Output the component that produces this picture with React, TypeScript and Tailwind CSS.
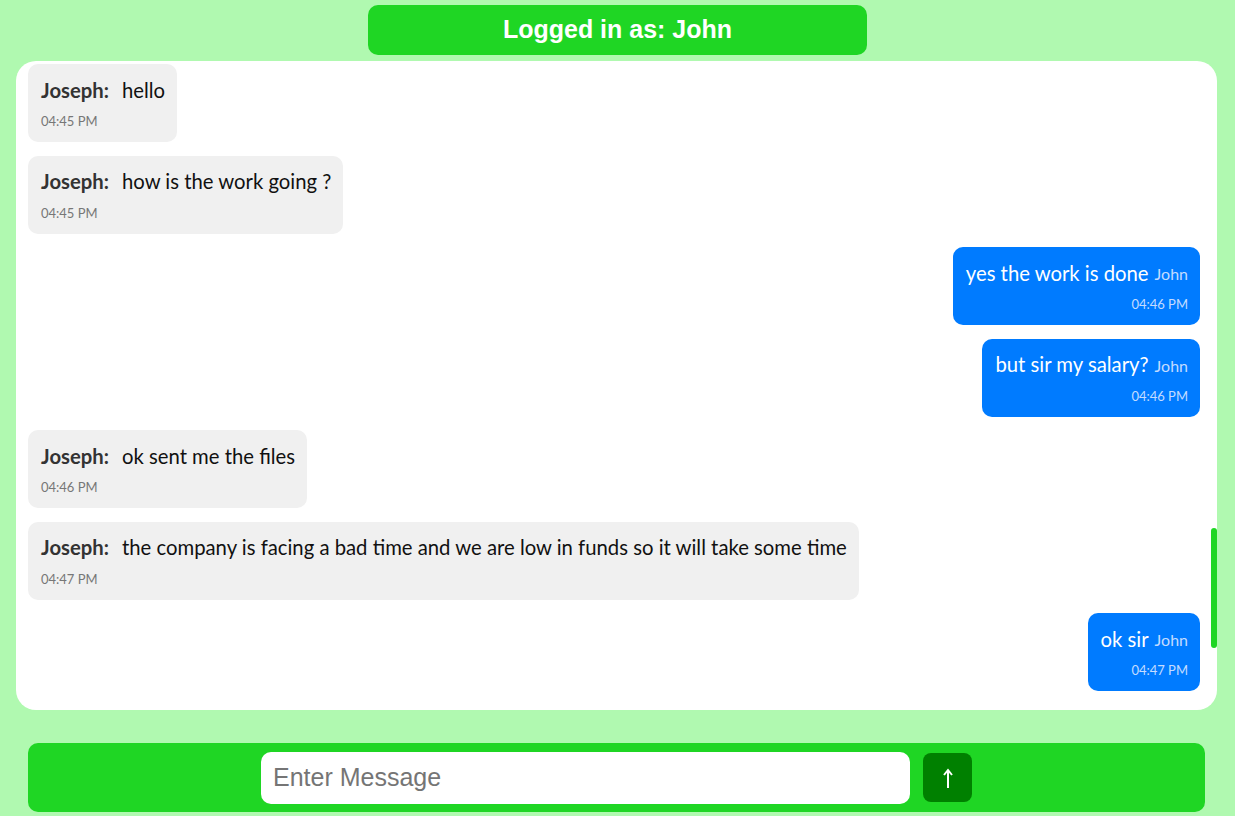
import React from "react";

type Msg = { from: string; text: string; time: string; mine: boolean };

const messages: Msg[] = [
  { from: "Joseph", text: "hello", time: "04:45 PM", mine: false },
  { from: "Joseph", text: "how is the work going ?", time: "04:45 PM", mine: false },
  { from: "John", text: "yes the work is done", time: "04:46 PM", mine: true },
  { from: "John", text: "but sir my salary?", time: "04:46 PM", mine: true },
  { from: "Joseph", text: "ok sent me the files", time: "04:46 PM", mine: false },
  {
    from: "Joseph",
    text: "the company is facing a bad time and we are low in funds so it will take some time",
    time: "04:47 PM",
    mine: false,
  },
  { from: "John", text: "ok sir", time: "04:47 PM", mine: true },
];

const Bubble = ({ m }: { m: Msg }) => {
  if (m.mine) {
    return (
      <div className="flex justify-end">
        <div className="bg-[#007bff] rounded-[10px] pl-[13px] pr-[12px] pt-[12px] pb-[12px] text-white">
          <div className="h-[28px] flex items-center">
            <span className="text-[20.3px]">{m.text}</span>
            <span className="text-[16px] text-[#c4dcff] ml-[6px] mt-[2px]">{m.from}</span>
          </div>
          <div className="h-[18px] mt-[8px] text-[13px] text-[#c4dcff] text-right leading-[18px]">{m.time}</div>
        </div>
      </div>
    );
  }
  return (
    <div className="flex justify-start">
      <div className="bg-[#f0f0f0] rounded-[10px] pl-[13px] pr-[12px] pt-[12px] pb-[12px]">
        <div className="h-[28px] flex items-center text-[20.3px]">
          <span className="font-bold text-[#333333] mr-[13px]">{m.from}:</span>
          <span className="text-[#111111]">{m.text}</span>
        </div>
        <div className="h-[18px] mt-[8px] text-[13px] text-[#777777] leading-[18px]">{m.time}</div>
      </div>
    </div>
  );
};

export default function App() {
  return (
    <div className="w-[1235px] h-[816px] bg-[#b0f9b0] flex flex-col overflow-hidden">
      <div className="flex justify-center pt-[5px]">
        <div
          className="w-[499px] h-[50px] bg-[#1fd624] rounded-[10px] flex items-center justify-center text-white font-bold text-[25px]"
          style={{ fontFamily: "'Liberation Sans', Arial, sans-serif" }}
        >
          Logged in as: John
        </div>
      </div>

      <div
        className="relative ml-[16px] mr-[18px] mt-[6px] h-[649px] bg-white rounded-[20px] overflow-hidden"
        style={{ fontFamily: "Lato, 'Noto Sans', sans-serif" }}
      >
        <div className="flex flex-col gap-[13.5px] pt-[3px] pl-[12px] pr-[17px]">
          {messages.map((m, i) => (
            <Bubble key={i} m={m} />
          ))}
        </div>
        <div className="absolute right-0 top-[467px] w-[6px] h-[120px] bg-[#1fd624] rounded-full" />
      </div>

      <div className="ml-[28px] mr-[30px] mt-[33px] h-[69px] bg-[#1fd624] rounded-[10px] flex items-center justify-center gap-[13px]">
        <input
          placeholder="Enter Message"
          className="w-[649px] h-[52px] bg-white rounded-[10px] px-[12px] text-[25px] outline-none placeholder:text-[#757575]"
          style={{ fontFamily: "'Liberation Sans', Arial, sans-serif" }}
        />
        <button className="w-[49px] h-[49px] bg-[#008000] rounded-[8px] flex items-center justify-center">
          <svg width="12" height="22" viewBox="0 0 12 22" fill="none" stroke="white" strokeWidth="2">
            <path d="M6 21V3" />
            <path d="M2 8L6 3L10 8" />
          </svg>
        </button>
      </div>
    </div>
  );
}
